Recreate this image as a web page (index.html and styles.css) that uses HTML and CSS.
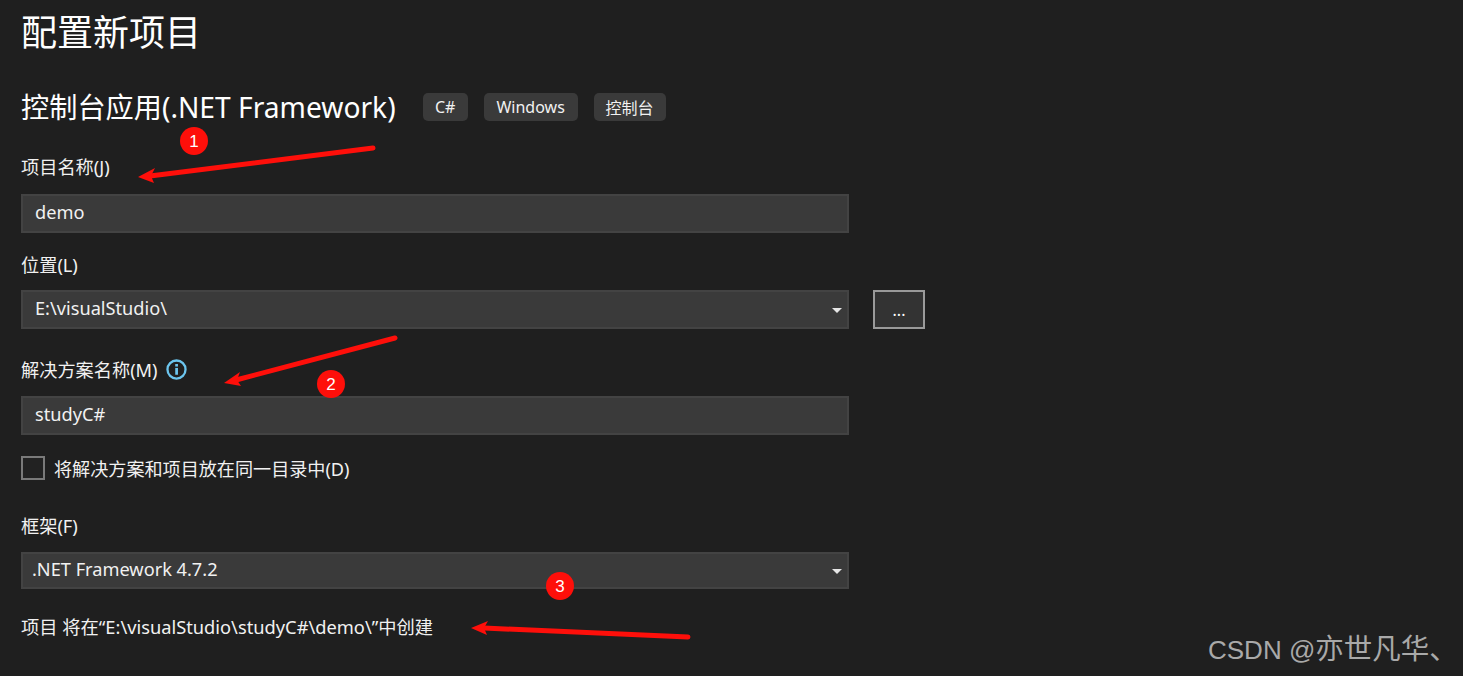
FILE: index.html
```html
<!DOCTYPE html>
<html lang="zh-CN">
<head>
<meta charset="utf-8">
<title>配置新项目</title>
<link rel="stylesheet" href="styles.css">
</head>
<body>
<main class="page">
  <h1 class="title">配置新项目</h1>
  <div class="subhead">
    <h2 class="subtitle">控制台应用(.NET Framework)</h2>
    <div class="tags">
      <span class="tag tag-cs">C#</span>
      <span class="tag tag-win">Windows</span>
      <span class="tag tag-con">控制台</span>
    </div>
  </div>

  <div class="label label-name">项目名称(J)</div>
  <div class="field">demo</div>

  <div class="label label-loc">位置(L)</div>
  <div class="row">
    <div class="field select">E:\visualStudio\<span class="caret"></span></div>
    <div class="browse">...</div>
  </div>

  <div class="label label-sol">解决方案名称(M)
    <svg class="info" viewBox="0 0 20 20" width="21" height="21" aria-hidden="true">
      <circle cx="10" cy="10" r="8.6" fill="none" stroke="#6cc5ee" stroke-width="2.2"/>
      <rect x="8.8" y="8.5" width="2.6" height="6.5" fill="#6cc5ee"/>
      <rect x="8.8" y="4.8" width="2.6" height="2.4" fill="#6cc5ee"/>
    </svg>
  </div>
  <div class="field">studyC#</div>

  <div class="check-row">
    <span class="checkbox"></span>
    <span class="check-label">将解决方案和项目放在同一目录中(D)</span>
  </div>

  <div class="label label-fw">框架(F)</div>
  <div class="field select fw">.NET Framework 4.7.2<span class="caret"></span></div>

  <div class="path">项目 将在“E:\visualStudio\studyC#\demo\”中创建</div>
</main>

<svg class="marks" viewBox="0 0 1463 676" width="1463" height="676" aria-hidden="true">
  <g stroke="#fe0f0a" stroke-width="5" stroke-linecap="round" fill="none">
    <path d="M373 148 L150 176"/>
    <path d="M395 338 L236 380"/>
    <path d="M688 637 L484 628"/>
  </g>
  <g fill="#fe0f0a">
    <path d="M138 177 L155 168 L151 176 L154 183 Z"/>
    <path d="M224 383 L240 372 L237 380 L241 386 Z"/>
    <path d="M471 628 L488 621 L484 628 L487 635 Z"/>
    <circle cx="194" cy="141" r="14"/>
    <circle cx="331" cy="384" r="14"/>
    <circle cx="560" cy="586" r="14"/>
  </g>
  <g fill="#fff" font-family="'Liberation Sans', sans-serif" font-size="17" text-anchor="middle">
    <text x="194" y="147">1</text>
    <text x="331" y="390">2</text>
    <text x="560" y="592">3</text>
  </g>
</svg>

<div class="watermark">CSDN @<span class="watermark-cjk">亦世凡华、</span></div>
</body>
</html>
```

FILE: styles.css
```css
* { box-sizing: border-box; }

html, body {
  margin: 0;
  height: 676px;
  overflow: hidden;
  background: #1f1f1f;
}

body {
  position: relative;
  color: #f1f1f1;
  font-family: "Noto Sans", "Noto Sans CJK SC", sans-serif;
  font-size: 18.2px;
}

.page {
  display: flex;
  flex-direction: column;
  align-items: flex-start;
  padding: 8px 0 0 21px;
  width: 1463px;
}

.title {
  margin: 0;
  font-size: 36px;
  font-weight: 400;
  line-height: 50px;
  color: #fff;
}

.subhead {
  display: flex;
  align-items: center;
  margin-top: 28px;
  height: 42px;
}

.subtitle {
  margin: 0;
  font-size: 28.2px;
  font-weight: 400;
  line-height: 40px;
  color: #fff;
  white-space: nowrap;
}

.tags {
  display: flex;
  gap: 16px;
  margin-left: 27px;
}

.tag {
  display: flex;
  align-items: center;
  justify-content: center;
  height: 28px;
  border-radius: 5px;
  background: #3a3a3a;
  font-size: 16px;
  color: #f1f1f1;
}

.tag-cs { width: 45px; }
.tag-win { width: 94px; }
.tag-con { width: 72px; }

.label {
  display: flex;
  align-items: center;
  height: 26px;
  font-size: 18.2px;
  color: #f1f1f1;
}

.label-name { margin-top: 25px; }
.label-loc { margin-top: 18px; }
.label-sol { margin-top: 27px; }
.label-fw { margin-top: 32px; }

.info { margin-left: 8px; }

.field {
  position: relative;
  display: flex;
  align-items: center;
  width: 828px;
  height: 39px;
  margin-top: 15px;
  padding: 0 12px 3px;
  background: #3a3a3a;
  border: 2px solid #434343;
  font-size: 18.2px;
  color: #f1f1f1;
}

.row {
  display: flex;
  gap: 24px;
  margin-top: 13px;
}

.row .field { margin-top: 0; }

.label-sol + .field { margin-top: 14px; }

.select.fw {
  height: 37px;
  margin-top: 14px;
  padding-left: 9px;
}

.caret {
  position: absolute;
  right: 5px;
  top: 50%;
  margin-top: -2px;
  border-left: 5px solid transparent;
  border-right: 5px solid transparent;
  border-top: 5px solid #e6e6e6;
}

.browse {
  width: 52px;
  height: 39px;
  border: 2px solid #9a9a9a;
  background: #333;
  font-size: 16px;
  line-height: 36px;
  text-align: center;
  color: #fff;
}

.check-row {
  display: flex;
  align-items: center;
  gap: 9px;
  margin-top: 21px;
  height: 24px;
}

.checkbox {
  width: 24px;
  height: 24px;
  border: 2px solid #7a7a7a;
  background: #222;
}

.check-label { font-size: 18.1px; }

.path {
  margin-top: 25px;
  height: 26px;
  line-height: 26px;
  font-size: 18.27px;
  white-space: nowrap;
}

.marks {
  position: absolute;
  left: 0;
  top: 0;
  pointer-events: none;
}

.watermark {
  position: absolute;
  left: 1208px;
  top: 632px;
  font-family: "Liberation Sans", "Noto Sans CJK SC", sans-serif;
  font-size: 26px;
  line-height: 34px;
  color: #a9a9a9;
  white-space: nowrap;
}

.watermark-cjk { font-size: 28.5px; }
```
